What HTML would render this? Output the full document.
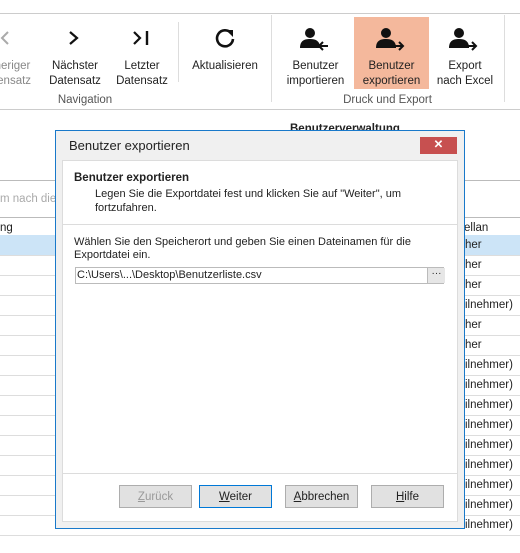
<!DOCTYPE html><html><head><style>
body{margin:0;width:520px;height:553px;background:#fff;font-family:"Liberation Sans",sans-serif;font-size:11.5px;color:#222;position:relative;overflow:hidden}
.a{position:absolute}
.t{position:absolute;text-align:center;line-height:15px;font-size:11.5px}
.hl{position:absolute;left:0;width:520px;height:1px;background:#d4d4d4}
.btn{position:absolute;top:485px;width:73px;height:23px;border:1px solid #adadad;background:#e1e1e1;text-align:center;line-height:23px;font-size:11.5px;box-sizing:border-box}
</style></head><body>
<div class="hl" style="top:13px;background:#ccc"></div>
<div class="hl" style="top:109px;background:#ccc"></div>
<div class="t" style="left:-10px;width:45px;top:59px;color:#888">heriger<br>tensatz</div>
<svg class="a" style="left:0;top:30px" width="12" height="16"><path d="M8 2l-6 6 6 6" stroke="#aaa" stroke-width="2" fill="none"/></svg>
<svg class="a" style="left:68px;top:30px" width="12" height="16"><path d="M2 2l7 6-7 6" stroke="#111" stroke-width="2.2" fill="none"/></svg>
<div class="t" style="left:45px;width:60px;top:59px">Nächster<br>Datensatz</div>
<svg class="a" style="left:132px;top:30px" width="20" height="16"><path d="M2 2l6 6-6 6" stroke="#111" stroke-width="2.2" fill="none"/><path d="M15 1v14" stroke="#111" stroke-width="2.4"/></svg>
<div class="t" style="left:112px;width:60px;top:59px">Letzter<br>Datensatz</div>
<div class="t" style="left:40px;width:90px;top:93px;color:#555">Navigation</div>
<div class="a" style="left:178px;top:22px;width:1px;height:60px;background:#ddd"></div>
<svg class="a" style="left:213px;top:26px" width="24" height="24"><path d="M18 7A8 8 0 1 0 20 13" stroke="#111" stroke-width="2.6" fill="none"/><path d="M13 4h7v7z" fill="#111"/></svg>
<div class="t" style="left:185px;width:80px;top:59px">Aktualisieren</div>
<div class="a" style="left:271px;top:15px;width:1px;height:87px;background:#ddd"></div>
<div class="a" style="left:354px;top:17px;width:75px;height:72px;background:#f4b89c"></div>
<svg class="a" style="left:298px;top:27px" width="32" height="24"><circle cx="12" cy="6" r="5" fill="#111"/><path d="M2 21c0-7 4-9 10-9s9 2 10 7v2z" fill="#111"/><path d="M30 19h-8M25 15l-4 4 4 4" stroke="#111" stroke-width="2" fill="none"/></svg>
<div class="t" style="left:278px;width:75px;top:59px">Benutzer<br>importieren</div>
<svg class="a" style="left:374px;top:27px" width="32" height="24"><circle cx="12" cy="6" r="5" fill="#111"/><path d="M2 21c0-7 4-9 10-9s9 2 10 7v2z" fill="#111"/><path d="M21 19h8M25 15l4 4-4 4" stroke="#111" stroke-width="2" fill="none"/></svg>
<div class="t" style="left:354px;width:75px;top:59px">Benutzer<br>exportieren</div>
<svg class="a" style="left:447px;top:27px" width="32" height="24"><circle cx="12" cy="6" r="5" fill="#111"/><path d="M2 21c0-7 4-9 10-9s9 2 10 7v2z" fill="#111"/><path d="M21 19h8M25 15l4 4-4 4" stroke="#111" stroke-width="2" fill="none"/></svg>
<div class="t" style="left:430px;width:70px;top:59px">Export<br>nach Excel</div>
<div class="t" style="left:320px;width:135px;top:93px;color:#555">Druck und Export</div>
<div class="a" style="left:504px;top:15px;width:1px;height:87px;background:#ddd"></div>
<div class="a" style="left:290px;top:123px;font-weight:bold">Benutzerverwaltung</div>
<div class="hl" style="top:180px;background:#bbb"></div>
<div class="a" style="left:0;top:193px;color:#aaa">m nach diese</div>
<div class="hl" style="top:217px;background:#bbb"></div>
<div class="a" style="left:0;top:222px">ng</div>
<div class="a" style="left:464px;top:222px">ellan</div>
<div class="a" style="left:0;top:235px;width:520px;height:20px;background:#cce4f7"></div>
<div id="rows"></div>
<script>
var h='',tx=['her','her','her','ilnehmer)','her','her','ilnehmer)','ilnehmer)','ilnehmer)','ilnehmer)','ilnehmer)','ilnehmer)','ilnehmer)','ilnehmer)','ilnehmer)'];
for(var i=0;i<15;i++){var y=235+i*20;h+='<div class="hl" style="top:'+(y+20)+'px;background:#ddd"></div><div class="a" style="left:465px;top:'+(y+4)+'px">'+tx[i]+'</div>';}
document.getElementById('rows').innerHTML=h;
</script>
<div class="a" style="left:55px;top:130px;width:408px;height:397px;background:#f0f0f0;border:1px solid #1979ca"></div>
<div class="a" style="left:69px;top:138px;font-size:13px">Benutzer exportieren</div>
<div class="a" style="left:420px;top:137px;width:37px;height:17px;background:#c75050;color:#fff;text-align:center;line-height:17px;font-weight:bold">✕</div>
<div class="a" style="left:62px;top:160px;width:394px;height:360px;background:#fff;border:1px solid #dcdcdc"></div>
<div class="a" style="left:63px;top:224px;width:394px;height:1px;background:#dcdcdc"></div>
<div class="a" style="left:74px;top:172px;font-weight:bold">Benutzer exportieren</div>
<div class="a" style="left:95px;top:187px;line-height:14px;font-size:11px">Legen Sie die Exportdatei fest und klicken Sie auf "Weiter", um<br>fortzufahren.</div>
<div class="a" style="left:74px;top:236px;line-height:13px;font-size:11px">Wählen Sie den Speicherort und geben Sie einen Dateinamen für die<br>Exportdatei ein.</div>
<div class="a" style="left:75px;top:267px;width:369px;height:17px;border:1px solid #bbb;box-sizing:border-box"></div>
<div class="a" style="left:77px;top:269px;font-size:11px">C:\Users\...\Desktop\Benutzerliste.csv</div>
<div class="a" style="left:427px;top:268px;width:17px;height:15px;background:#e6e6e6;border-left:1px solid #bbb;text-align:center;line-height:12px;font-size:10px">···</div>
<div class="a" style="left:63px;top:473px;width:394px;height:1px;background:#dcdcdc"></div>
<div class="btn" style="left:119px;color:#999"><u>Z</u>urück</div>
<div class="btn" style="left:199px;border-color:#0078d7"><u>W</u>eiter</div>
<div class="btn" style="left:285px"><u>A</u>bbrechen</div>
<div class="btn" style="left:371px"><u>H</u>ilfe</div>
</body></html>
